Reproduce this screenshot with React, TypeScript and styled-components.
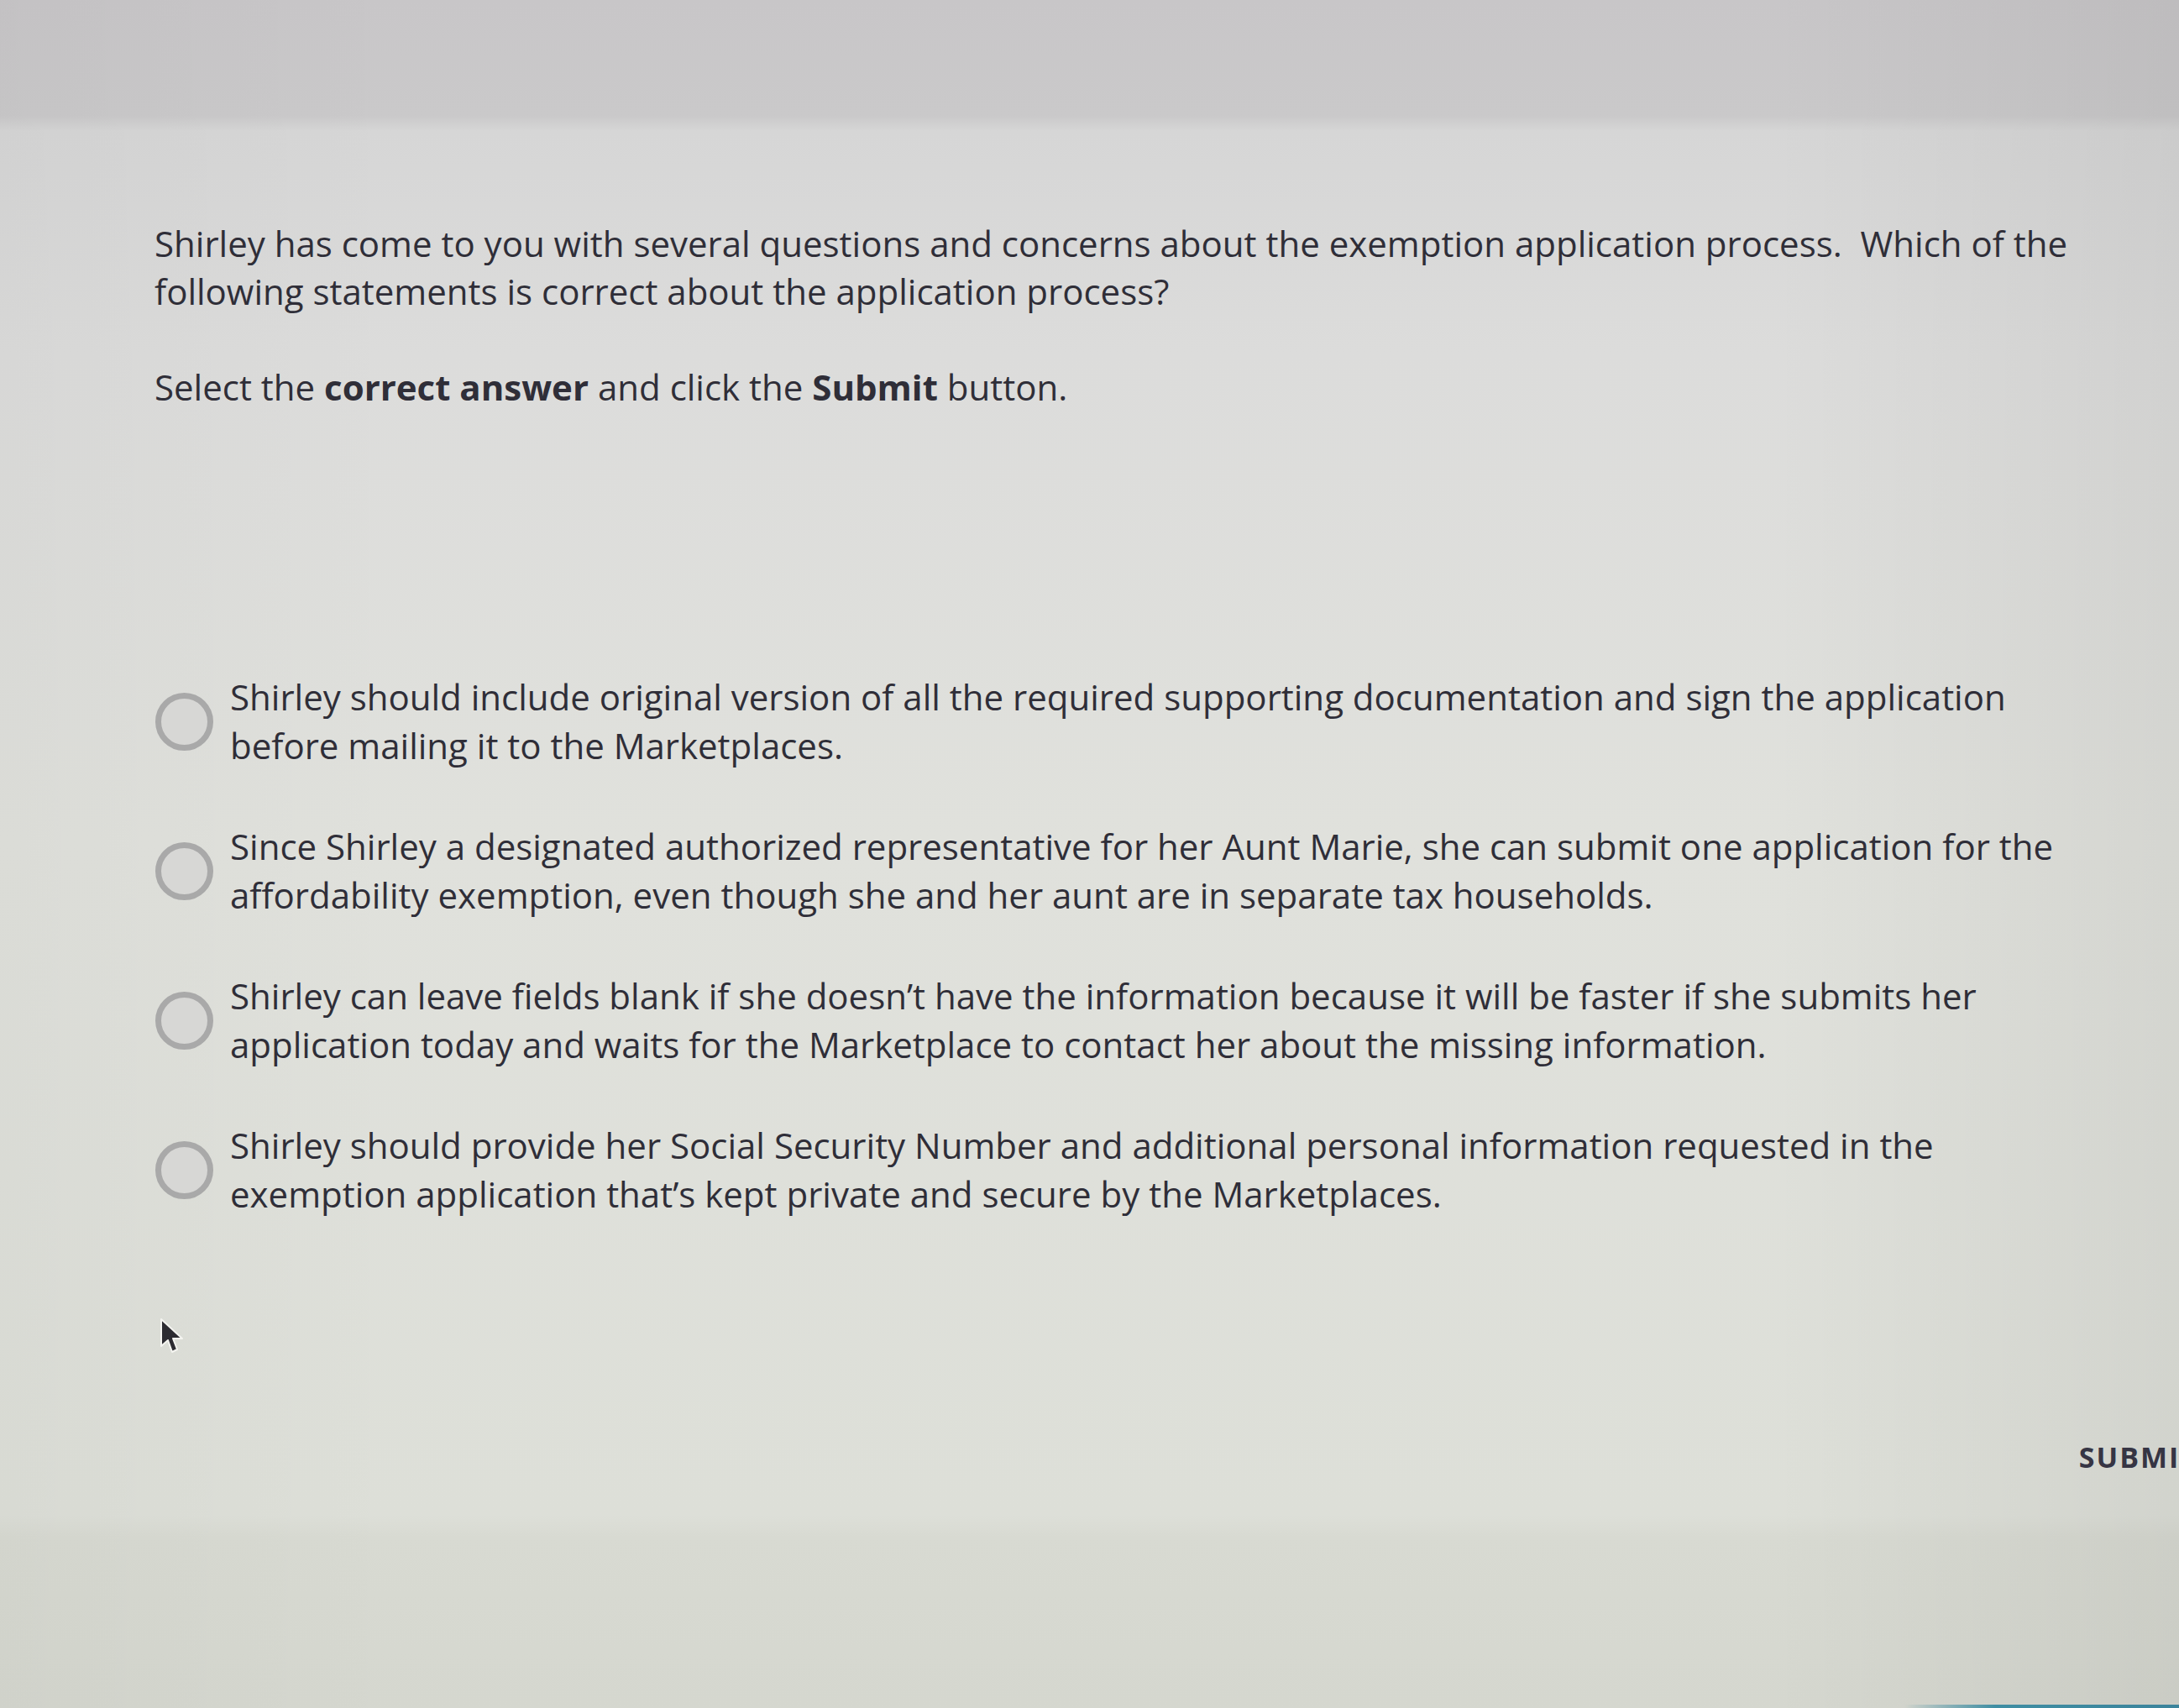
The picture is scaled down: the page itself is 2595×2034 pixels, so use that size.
import React from "react";
import styled, { createGlobalStyle } from "styled-components";

const GlobalStyle = createGlobalStyle`
  html, body {
    margin: 0;
    padding: 0;
    overflow: hidden;
    background: #d9d9d6;
  }
  * {
    box-sizing: border-box;
  }
`;

const Page = styled.div`
  position: relative;
  width: 2700px;
  height: 2034px;
  display: flex;
  flex-direction: column;
  font-family: "Open Sans", "Noto Sans", sans-serif;
  color: #2f2e38;
  background:
    linear-gradient(
      90deg,
      rgba(0, 0, 0, 0.025) 0,
      rgba(0, 0, 0, 0) 18%,
      rgba(0, 0, 0, 0) 78%,
      rgba(0, 0, 0, 0.05) 96%
    ),
    linear-gradient(
      180deg,
      #c8c6c8 0,
      #cac9ca 138px,
      #d6d6d6 156px,
      #dcdcdb 420px,
      #e0e1dc 1000px,
      #dddfd8 1805px,
      #d8dad2 1830px,
      #d5d7cf 2034px
    );
`;

const TopBand = styled.div`
  height: 150px;
  flex: none;
`;

const Content = styled.main`
  flex: 1;
  display: flex;
  flex-direction: column;
  padding: 111px 0 0 184px;
`;

const Paragraph = styled.p<{ $gap?: number }>`
  margin: ${(p) => p.$gap ?? 0}px 0 0;
  max-width: 2320px;
  font-size: 42px;
  line-height: 57px;
  font-weight: 400;

  strong {
    font-weight: 700;
  }
`;

const Options = styled.ul`
  list-style: none;
  margin: 312px 0 0;
  padding: 0;
  display: flex;
  flex-direction: column;
  gap: 62px;
`;

const Option = styled.li`
  display: flex;
  align-items: center;
  gap: 20px;
`;

const Radio = styled.span`
  flex: none;
  width: 69px;
  height: 69px;
  margin-left: 1px;
  border-radius: 50%;
  border: 7px solid #a9a9a9;
  background: #d7d7d5;
`;

const OptionText = styled.span`
  max-width: 2200px;
  font-size: 42px;
  line-height: 58px;
`;

const Footer = styled.div`
  display: flex;
  justify-content: flex-end;
  padding: 262px 82px 0 0;
`;

const SubmitButton = styled.button`
  border: 0;
  padding: 0;
  background: transparent;
  font-family: "Open Sans", "Noto Sans", sans-serif;
  font-size: 34px;
  line-height: 44px;
  font-weight: 700;
  letter-spacing: 2px;
  color: #363544;
  text-transform: uppercase;
`;

const BottomStrip = styled.div`
  margin-top: auto;
  height: 4px;
  background: linear-gradient(
    90deg,
    rgba(61, 140, 160, 0) 0,
    rgba(61, 140, 160, 0) 84%,
    #3f8ea3 88%,
    #3a7f98 100%
  );
`;

const Cursor = styled.svg`
  position: absolute;
  left: 188px;
  top: 1568px;
  width: 32px;
  height: 48px;
`;

const options = [
  "Shirley should include original version of all the required supporting documentation and sign the application before mailing it to the Marketplaces.",
  "Since Shirley a designated authorized representative for her Aunt Marie, she can submit one application for the affordability exemption, even though she and her aunt are in separate tax households.",
  "Shirley can leave fields blank if she doesn\u2019t have the information because it will be faster if she submits her application today and waits for the Marketplace to contact her about the missing information.",
  "Shirley should provide her Social Security Number and additional personal information requested in the exemption application that\u2019s kept private and secure by the Marketplaces.",
];

export default function App() {
  return (
    <>
      <GlobalStyle />
      <Page>
        <TopBand />
        <Content>
          <Paragraph>
            Shirley has come to you with several questions and concerns about the exemption
            application process.&nbsp; Which of the following statements is correct about the
            application process?
          </Paragraph>
          <Paragraph $gap={57}>
            Select the <strong>correct answer</strong> and click the <strong>Submit</strong>{" "}
            button.
          </Paragraph>
          <Options>
            {options.map((text) => (
              <Option key={text}>
                <Radio />
                <OptionText>{text}</OptionText>
              </Option>
            ))}
          </Options>
          <Footer>
            <SubmitButton>Submit</SubmitButton>
          </Footer>
        </Content>
        <BottomStrip />
        <Cursor viewBox="0 0 32 48">
          <path
            d="M4 3 L4 35 L12 28 L17 42 L23 39 L18 26 L29 26 Z"
            fill="#2c2b31"
            stroke="#f4f4f0"
            strokeWidth="2"
            strokeLinejoin="round"
          />
        </Cursor>
      </Page>
    </>
  );
}
